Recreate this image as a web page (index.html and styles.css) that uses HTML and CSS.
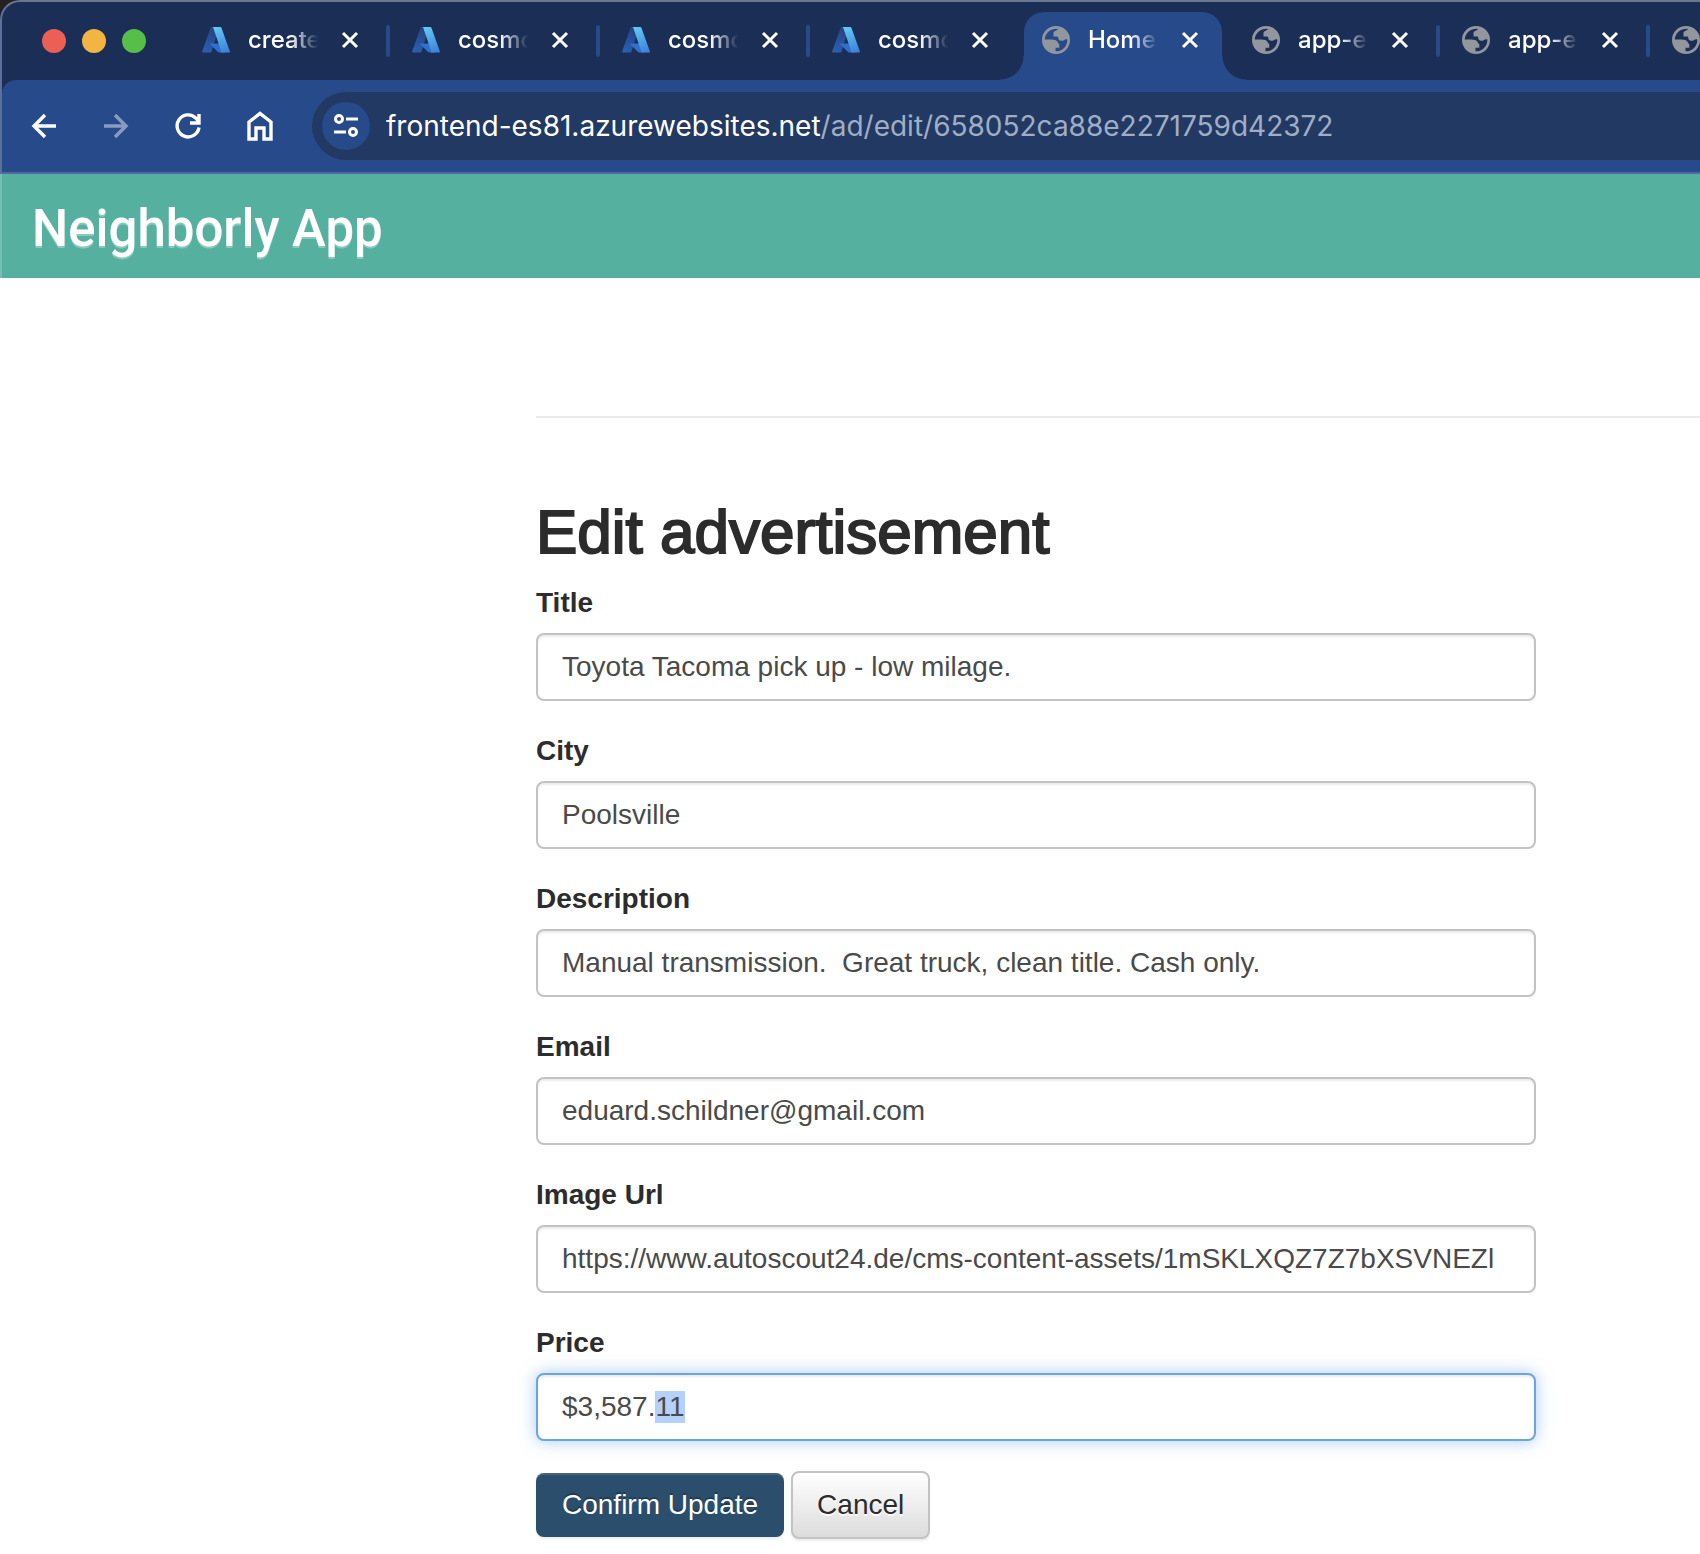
FILE: index.html
```html
<!DOCTYPE html>
<html lang="en">
<head>
<meta charset="utf-8">
<title>Home</title>
<link rel="stylesheet" href="styles.css">
</head>
<body>
<svg class="sprite" aria-hidden="true">
  <defs>
    <linearGradient id="az-left" x1="0.6" y1="0" x2="0.2" y2="1"><stop offset="0" stop-color="#26427f"/><stop offset="1" stop-color="#2a60b4"/></linearGradient>
    <linearGradient id="az-right" x1="0.3" y1="0" x2="0.6" y2="1"><stop offset="0" stop-color="#62c8f4"/><stop offset="1" stop-color="#3f84da"/></linearGradient>
  </defs>
  <symbol id="azure" viewBox="0 0 96 96">
    <path fill="url(#az-left)" d="M33.3 3h26L32.3 88a4.200 4.200 0 0 1-3.900 3H5a4.100 4.100 0 0 1-3.900-5.500L29.400 6a4.200 4.200 0 0 1 3.900-3z"/>
    <path fill="#2f6fd0" d="M71 60H29.900a1.900 1.900 0 0 0-1.300 3.300L56 89.800a4.200 4.200 0 0 0 2.800 1.200H80z"/>
    <path fill="url(#az-right)" d="M66.600 6a4.100 4.100 0 0 0-3.900-3H34.600a4.100 4.100 0 0 1 3.900 3l27 79.500a4.100 4.100 0 0 1-3.900 5.500h29.500a4.100 4.100 0 0 0 3.900-5.500z"/>
  </symbol>
  <symbol id="globe" viewBox="0 0 28 28">
    <path fill="#92979d" fill-rule="evenodd" d="M14 0a14 14 0 1 0 0 28 14 14 0 0 0 0-28zM16 3C15.500 4.600 12 4.500 11.500 6.800v3.700h4c1 0 .5 3 2 3.800 2.500.8 3 .8 4.500-.3 1-.8 2-1 3.300-.6A11.300 11.300 0 0 1 13.500 25.300v-3.500h3.800v-3.600c-1.300-.5-1.500-2.500-3-3.600-2-1.200-5-1-11.600-1A11.300 11.300 0 0 1 16 3z"/>
  </symbol>
  <symbol id="close" viewBox="0 0 18 18"><path d="M2 2l14 14M16 2L2 16" fill="none" stroke="#fff" stroke-width="3"/></symbol>
</svg>

<div class="window">
  <header class="chrome">
    <div class="tab-strip">
      <div class="lights"><span class="light red"></span><span class="light yellow"></span><span class="light green"></span></div>
      <nav class="tabs" aria-label="Tabs">
        <div class="tab divided"><svg class="favicon"><use href="#azure"/></svg><span class="tab-title">create</span><button class="tab-close" aria-label="Close tab"><svg><use href="#close"/></svg></button></div>
        <div class="tab divided"><svg class="favicon"><use href="#azure"/></svg><span class="tab-title">cosmo</span><button class="tab-close" aria-label="Close tab"><svg><use href="#close"/></svg></button></div>
        <div class="tab divided"><svg class="favicon"><use href="#azure"/></svg><span class="tab-title">cosmo</span><button class="tab-close" aria-label="Close tab"><svg><use href="#close"/></svg></button></div>
        <div class="tab"><svg class="favicon"><use href="#azure"/></svg><span class="tab-title">cosmo</span><button class="tab-close" aria-label="Close tab"><svg><use href="#close"/></svg></button></div>
        <div class="tab active"><svg class="favicon"><use href="#globe"/></svg><span class="tab-title">Home</span><button class="tab-close" aria-label="Close tab"><svg><use href="#close"/></svg></button></div>
        <div class="tab divided"><svg class="favicon"><use href="#globe"/></svg><span class="tab-title">app-e</span><button class="tab-close" aria-label="Close tab"><svg><use href="#close"/></svg></button></div>
        <div class="tab divided"><svg class="favicon"><use href="#globe"/></svg><span class="tab-title">app-e</span><button class="tab-close" aria-label="Close tab"><svg><use href="#close"/></svg></button></div>
        <div class="tab"><svg class="favicon"><use href="#globe"/></svg></div>
      </nav>
    </div>
    <div class="toolbar">
      <button class="tool" aria-label="Back"><svg viewBox="0 0 32 32"><path d="M28 16H6M17 5L6 16l11 11"/></svg></button>
      <button class="tool" aria-label="Forward" disabled><svg viewBox="0 0 32 32"><path d="M4 16h22M15 5l11 11-11 11"/></svg></button>
      <button class="tool" aria-label="Reload"><svg viewBox="0 0 32 32"><path d="M27 17.500A11 11 0 1 1 24 8.200l2.500 3M27 4v9h-9"/></svg></button>
      <button class="tool" aria-label="Home"><svg viewBox="0 0 32 32"><path d="M5 12v17h7V18h8v11h7V12L16 3.500z"/></svg></button>
      <div class="omnibox">
        <button class="site-info" aria-label="View site information"><svg viewBox="0 0 24 24"><path d="M12 5h12M0 18h12"/><circle cx="5" cy="5" r="3.500"/><circle cx="19" cy="18" r="3.500"/></svg></button>
        <div class="url" role="textbox" aria-label="Address">frontend-es81.azurewebsites.net<span class="url-path">/ad/edit/658052ca88e2271759d42372</span></div>
      </div>
    </div>
  </header>
  <div class="app-bar"><a class="brand" href="#">Neighborly App</a></div>
</div>

<main class="content">
  <hr class="rule">
  <form class="form">
    <h2 class="heading">Edit advertisement</h2>
    <div class="field"><label for="title">Title</label><input id="title" type="text" value="Toyota Tacoma pick up - low milage."></div>
    <div class="field"><label for="city">City</label><input id="city" type="text" value="Poolsville"></div>
    <div class="field"><label for="description">Description</label><input id="description" type="text" value="Manual transmission.  Great truck, clean title. Cash only."></div>
    <div class="field"><label for="email">Email</label><input id="email" type="text" value="eduard.schildner@gmail.com"></div>
    <div class="field"><label for="image">Image Url</label><input id="image" type="text" value="https://www.autoscout24.de/cms-content-assets/1mSKLXQZ7Z7bXSVNEZl"></div>
    <div class="field"><label for="price">Price</label><input id="price" type="text" value="$3,587.11"></div>
    <div class="actions">
      <button type="submit" class="btn primary">Confirm Update</button>
      <button type="button" class="btn">Cancel</button>
    </div>
  </form>
</main>
<script src="script.js"></script>
</body>
</html>
```
FILE: styles.css
```css
* { box-sizing: border-box; }

body {
  margin: 0;
  background: #fff;
  color: #2c2c2c;
  font: 28px/40px "Liberation Sans", Arial, sans-serif;
  overflow-x: hidden;
}

button { border: 0; padding: 0; background: none; font: inherit; color: inherit; }

.sprite { position: absolute; width: 0; height: 0; }

.window { background: linear-gradient(#222 20px, #56b0a0 20px); }

.chrome {
  border-top: 2px solid #6a7790;
  border-bottom: 2px solid #4c6ba5;
  border-left: 2px solid #5c7099;
  border-top-left-radius: 20px;
  background: #1b2e55;
  color: #fff;
  font-family: Inter, "Liberation Sans", sans-serif;
  overflow: hidden;
}

.tab-strip { display: flex; height: 78px; padding-left: 40px; }

.lights { display: flex; flex: none; gap: 16px; width: 142px; padding-top: 27px; }
.light { width: 24px; height: 24px; border-radius: 50%; }
.red { background: #ec5f54; }
.yellow { background: #f3b541; }
.green { background: #57bf47; }

.tabs { display: flex; gap: 12px; padding-top: 10px; }

.tab {
  position: relative;
  display: flex;
  flex: none;
  align-items: center;
  width: 198px;
  height: 68px;
  padding: 0 23px 12px 18px;
}
.tab.divided::after {
  content: "";
  position: absolute;
  right: -8px;
  top: 13px;
  width: 4px;
  height: 32px;
  border-radius: 2px;
  background: #274a8b;
}
.tab.active { background: #274a8b; border-radius: 20px 20px 0 0; }
.tab.active::before,
.tab.active::after {
  content: "";
  position: absolute;
  bottom: 0;
  width: 24px;
  height: 24px;
}
.tab.active::before { left: -24px; background: radial-gradient(circle at 0 0, #1b2e55 23px, #274a8b 24px); }
.tab.active::after { right: -24px; background: radial-gradient(circle at 100% 0, #1b2e55 23px, #274a8b 24px); }

.favicon { flex: none; width: 28px; height: 28px; }
.tab-title {
  width: 70px;
  margin-left: 18px;
  overflow: hidden;
  white-space: nowrap;
  font-size: 24px;
  font-weight: 500;
  line-height: 32px;
  -webkit-mask-image: linear-gradient(90deg, #000 60%, transparent);
  mask-image: linear-gradient(90deg, #000 60%, transparent);
}
.tab-close { display: flex; margin-left: auto; }
.tab-close svg { width: 18px; height: 18px; }

.toolbar {
  display: flex;
  align-items: center;
  height: 92px;
  padding-left: 26px;
  border-top-left-radius: 14px;
  background: #274a8b;
}
.tool { display: flex; flex: none; margin-right: 40px; }
.tool svg { width: 32px; height: 32px; fill: none; stroke: #fff; stroke-width: 3.4; }
.tool:disabled { opacity: .45; }

.omnibox {
  display: flex;
  flex: 1;
  align-items: center;
  gap: 16px;
  height: 68px;
  margin-left: -4px;
  padding-left: 10px;
  border-radius: 34px 0 0 34px;
  background: #223963;
}
.site-info {
  display: flex;
  align-items: center;
  justify-content: center;
  width: 48px;
  height: 48px;
  border-radius: 50%;
  background: #274a8b;
}
.site-info svg { width: 24px; height: 24px; fill: none; stroke: #fff; stroke-width: 3; }
.url { font-size: 28px; white-space: nowrap; }
.url-path { color: #a0aec5; }

.app-bar {
  display: flex;
  align-items: center;
  height: 104px;
  padding: 6px 0 0 30px;
  border-left: 2px solid #76bfb2;
  background: #56b0a0;
}
.brand {
  color: #fff;
  font: 500 51px/60px Roboto, sans-serif;
  text-decoration: none;
  text-shadow: 0 2px 0 rgba(255, 255, 255, .3);
}

.content { padding: 138px 0 14px 536px; }
.rule { height: 2px; margin: 0; border: 0; background: #eaeaea; }

.form { max-width: 1000px; padding-top: 80px; }
.heading {
  margin: 0 0 17px;
  font-size: 62px;
  line-height: 68px;
  font-weight: 400;
  -webkit-text-stroke: 2px #2c2c2c;
}

.field { display: flex; flex-direction: column; gap: 10px; margin-bottom: 30px; }
.field label { font-weight: 700; }
.field input {
  width: 100%;
  height: 68px;
  padding: 0 24px;
  border: 2px solid #c3c3c3;
  border-radius: 8px;
  outline: 0;
  background: #fff;
  box-shadow: inset 0 2px 2px rgba(0, 0, 0, .08);
  color: #4a4a4a;
  font: inherit;
  line-height: 34px;
}
.field input:focus {
  border-color: #69a4e4;
  box-shadow: inset 0 2px 2px rgba(0, 0, 0, .08), 0 0 16px rgba(82, 152, 228, .5);
}
.field input::selection { background: rgba(179, 208, 251, .99); color: #4a4a4a; }

.actions { display: flex; align-items: center; gap: 7px; }
.btn {
  height: 68px;
  padding: 0 24px;
  border: 2px solid #c3c3c3;
  border-radius: 8px;
  background: linear-gradient(#fff, #dcdcdc);
  box-shadow: 0 2px 2px rgba(0, 0, 0, .08);
  color: #2c2c2c;
  text-shadow: 0 2px 0 rgba(255, 255, 255, .8);
}
.btn.primary {
  height: 64px;
  padding: 0 26px;
  border: 0;
  background: #2a4e6c;
  box-shadow: inset 0 2px 0 rgba(255, 255, 255, .12), 0 2px 2px rgba(0, 0, 0, .08);
  color: #fff;
  text-shadow: 0 -2px 0 rgba(0, 0, 0, .25);
}
```
FILE: script.js
```js
const price = document.getElementById("price");
price.focus({ preventScroll: true });
price.setSelectionRange(price.value.length - 2, price.value.length);
```
